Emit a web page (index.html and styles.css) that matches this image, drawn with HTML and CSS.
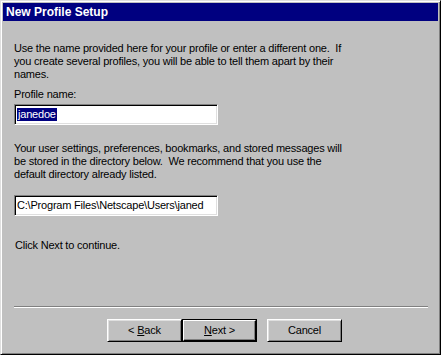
FILE: index.html
```html
<!DOCTYPE html>
<html>
<head>
<meta charset="utf-8">
<link rel="stylesheet" href="styles.css">
<title>New Profile Setup</title>
</head>
<body>
<div class="window">
  <div class="titlebar">New Profile Setup</div>
  <div class="content">
    <p class="para first">Use the name provided here for your profile or enter a different one.&nbsp; If you create several profiles, you will be able to tell them apart by their names.</p>
    <div class="label">Profile name:</div>
    <div class="field"><span class="sel">janedoe</span></div>
    <p class="para second">Your user settings, preferences, bookmarks, and stored messages will be stored in the directory below.&nbsp; We recommend that you use the default directory already listed.</p>
    <div class="field field2">C:\Program Files\Netscape\Users\janed</div>
    <div class="hint">Click Next to continue.</div>
  </div>
  <div class="separator"></div>
  <div class="buttons">
    <div class="btn"><span>&lt;&nbsp;<u>B</u>ack</span></div>
    <div class="btn default"><span class="inner"><span><u>N</u>ext&nbsp;&gt;</span></span></div>
    <div class="btn cancel"><span>Cancel</span></div>
  </div>
</div>
</body>
</html>
```
FILE: styles.css
```css
html, body {
  margin: 0;
  padding: 0;
  background: #c0c0c0;
}
body {
  font-family: "Liberation Sans", Arial, sans-serif;
  font-size: 11px;
  letter-spacing: -0.2px;
  color: #000;
}
.window {
  width: 441px;
  height: 355px;
  box-sizing: border-box;
  background: #c0c0c0;
  border: 1px solid;
  border-color: #dfdfdf #000 #000 #dfdfdf;
  box-shadow: inset 1px 1px #fff, inset -1px -1px #808080;
  padding: 2px;
  display: flex;
  flex-direction: column;
}
.titlebar {
  height: 18px;
  background: #000080;
  color: #fff;
  font-weight: bold;
  font-size: 12px;
  letter-spacing: 0;
  line-height: 18px;
  padding-left: 3px;
}
.content {
  padding-left: 11px;
  padding-right: 20px;
  display: flex;
  flex-direction: column;
  align-items: flex-start;
}
.para {
  margin: 0;
  line-height: 13px;
  width: 335px;
}
.para.first {
  margin-top: 21px;
}
.label {
  margin-top: 7px;
  line-height: 13px;
}
.field {
  margin-top: 3px;
  width: 204px;
  height: 21px;
  box-sizing: border-box;
  background: #fff;
  border: 1px solid;
  border-color: #808080 #fff #fff #808080;
  box-shadow: inset 1px 1px #000, inset -1px -1px #dfdfdf;
  padding: 3px 2px 0 2px;
  line-height: 13px;
  white-space: nowrap;
  overflow: hidden;
}
.sel {
  background: #000080;
  color: #fff;
  display: inline-block;
  padding: 0 1px;
}
.para.second {
  margin-top: 17px;
}
.field2 {
  margin-top: 14px;
  padding-left: 2px;
}
.hint {
  margin-top: 23px;
  line-height: 13px;
  padding-left: 1px;
}
.separator {
  margin: auto 10px 0 11px;
  border-top: 1px solid #808080;
  border-bottom: 1px solid #fff;
  height: 0;
}
.buttons {
  display: flex;
  padding-left: 104px;
  margin-top: 11px;
  margin-bottom: 10px;
}
.btn {
  width: 75px;
  height: 23px;
  box-sizing: border-box;
  border: 1px solid;
  border-color: #fff #000 #000 #fff;
  box-shadow: inset 1px 1px #dfdfdf, inset -1px -1px #808080;
  display: flex;
  align-items: center;
  justify-content: center;
  line-height: 13px;
}
.btn.default {
  border: 1px solid #000;
  box-shadow: none;
  padding: 0;
}
.btn.default .inner {
  flex: 1;
  align-self: stretch;
  display: flex;
  align-items: center;
  justify-content: center;
  border: 1px solid;
  border-color: #fff #000 #000 #fff;
  box-shadow: inset -1px -1px #808080;
}
.btn.cancel {
  margin-left: 10px;
}
```
